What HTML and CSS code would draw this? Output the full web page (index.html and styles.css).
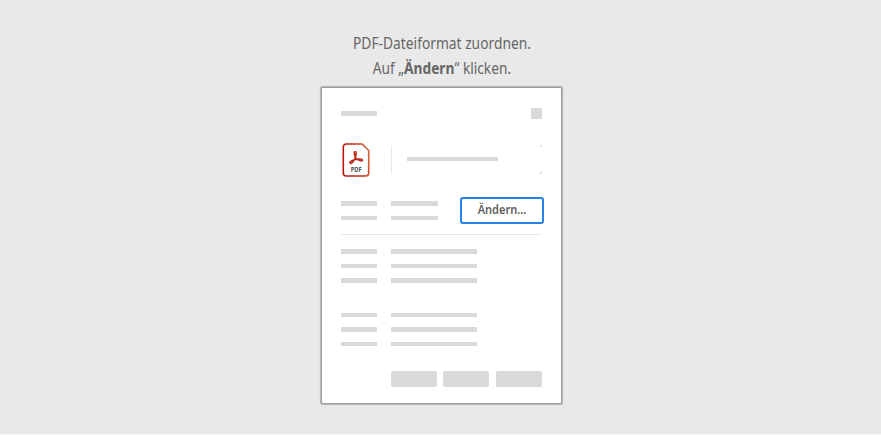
FILE: index.html
```
<!DOCTYPE html>
<html lang="de">
<head>
<meta charset="utf-8">
<title>PDF-Dateiformat zuordnen</title>
<link rel="stylesheet" href="styles.css">
</head>
<body>
<main class="stage">
  <div class="caption">
    <p class="first">PDF-Dateiformat zuordnen.</p>
    <p class="second">Auf „<b>Ändern</b>“ klicken.</p>
  </div>
  <section class="dialog">
    <header class="titlebar"><i class="bar short"></i><i class="close"></i></header>
    <div class="file">
      <svg class="pdf" width="28" height="34" viewBox="0 0 28 34">
        <defs><linearGradient id="edge" x1="0" x2="1" y1="0.3" y2="0"><stop offset="0" stop-color="#b81710"/><stop offset="0.45" stop-color="#c62c17"/><stop offset="1" stop-color="#d66b3c"/></linearGradient></defs>
        <path d="M4.300 1H20.200L26.700 7.500V30a3 3 0 0 1-3 3H4.300a3 3 0 0 1-3-3V4a3 3 0 0 1 3-3Z" fill="#fff" stroke="url(#edge)" stroke-width="1.6"/>
        <path d="M13.300 14.500C12.200 11.500 11.800 8.500 13.200 8.400C14.800 8.500 14.300 11.500 13.300 14.500C12.200 17.400 9.900 20.500 8.400 20.400C6.500 19.700 9.800 17.100 13.300 16.400C16.500 15.700 20.600 15.800 20.500 17.300C19.500 18.800 15.300 16.800 13.300 14.500Z" fill="none" stroke="#bd2b1b" stroke-width="1.5" stroke-linejoin="round"/>
        <text class="pdf-label" x="14.200" y="28.600" text-anchor="middle" textLength="11" lengthAdjust="spacingAndGlyphs">PDF</text>
      </svg>
      <div class="field"><i class="bar"></i></div>
    </div>
    <div class="assignment">
      <div class="rows">
        <div class="row"><i class="bar short"></i><i class="bar medium"></i></div>
        <div class="row"><i class="bar short"></i><i class="bar medium"></i></div>
      </div>
      <button class="change"><span>Ändern...</span></button>
    </div>
    <div class="rows details">
      <div class="row"><i class="bar short"></i><i class="bar long"></i></div>
      <div class="row"><i class="bar short"></i><i class="bar long"></i></div>
      <div class="row"><i class="bar short"></i><i class="bar long"></i></div>
    </div>
    <div class="rows dates">
      <div class="row"><i class="bar short"></i><i class="bar long"></i></div>
      <div class="row"><i class="bar short"></i><i class="bar long"></i></div>
      <div class="row"><i class="bar short"></i><i class="bar long"></i></div>
    </div>
    <footer class="actions"><i></i><i></i><i></i></footer>
  </section>
</main>
</body>
</html>
```
FILE: styles.css
```
* { box-sizing: border-box; }
body { margin: 0; background: #e9e9e9; font-family: "Noto Sans", sans-serif; color: #666; overflow: hidden; }
.stage { height: 435px; padding: 31px 0 0 1px; display: flex; flex-direction: column; align-items: center; border-bottom: 1px solid #f7f7f7; }
.caption { height: 56px; padding-left: 2px; text-align: center; font-size: 15.500px; line-height: 25px; white-space: nowrap; }
.caption p { margin: 0; }
.first { transform: scaleX(.89); }
.second { transform: scaleX(.885); }
.dialog { width: 241px; height: 317px; border: 1px solid #a0a0a0; border-radius: 2px; background: #fff; padding: 20px 19px 0; box-shadow: 0 0 1px 0.500px #b0b0b0; }
.bar { display: block; height: 4.500px; background: #d9d9d9; border-radius: 0.500px; }
.short { width: 36px; }
.medium { width: 47.500px; }
.long { width: 86.500px; }
.titlebar { height: 11px; display: flex; justify-content: space-between; align-items: center; }
.close { width: 11px; height: 11px; background: #d9d9d9; }
.file { margin-top: 24px; height: 34px; display: flex; align-items: center; }
.pdf { margin-left: 1px; flex: none; }
.pdf-label { font: 700 7.500px "Noto Sans", sans-serif; fill: #505050; }
.field { margin: 0 0 2px 21px; width: 151px; height: 29px; border-left: 1px solid #e8e8e8; border-radius: 2px; padding: 12px 0 0 15px; position: relative; }
.field .bar { width: 91px; }
.field::before, .field::after { content: ""; position: absolute; right: 0; width: 2px; height: 2px; border-right: 1px solid #e2e2e2; }
.field::before { top: 0; border-top: 1px solid #e2e2e2; }
.field::after { bottom: 0; border-bottom: 1px solid #e2e2e2; }
.assignment { margin-top: 20px; height: 38px; border-bottom: 1px solid #e8e8e8; display: flex; align-items: flex-start; }
.rows { display: flex; flex-direction: column; gap: 10px; }
.row { display: flex; gap: 14px; }
.assignment .rows { margin-top: 4px; }
.change { margin: 0 -2px 0 auto; width: 84px; height: 27px; flex: none; border: 2px solid #2680eb; border-radius: 3px; background: #fff; padding: 0 0 2px; font: 600 12.500px/20px "Noto Sans", sans-serif; color: #606060; }
.change span { display: block; transform: scaleX(.88); }
.details { margin-top: 14px; }
.dates { margin-top: 30px; }
.actions { margin: 25px 0 0 50px; display: flex; justify-content: space-between; }
.actions i { width: 46px; height: 16px; border-radius: 2px; background: #d9d9d9; }
```
